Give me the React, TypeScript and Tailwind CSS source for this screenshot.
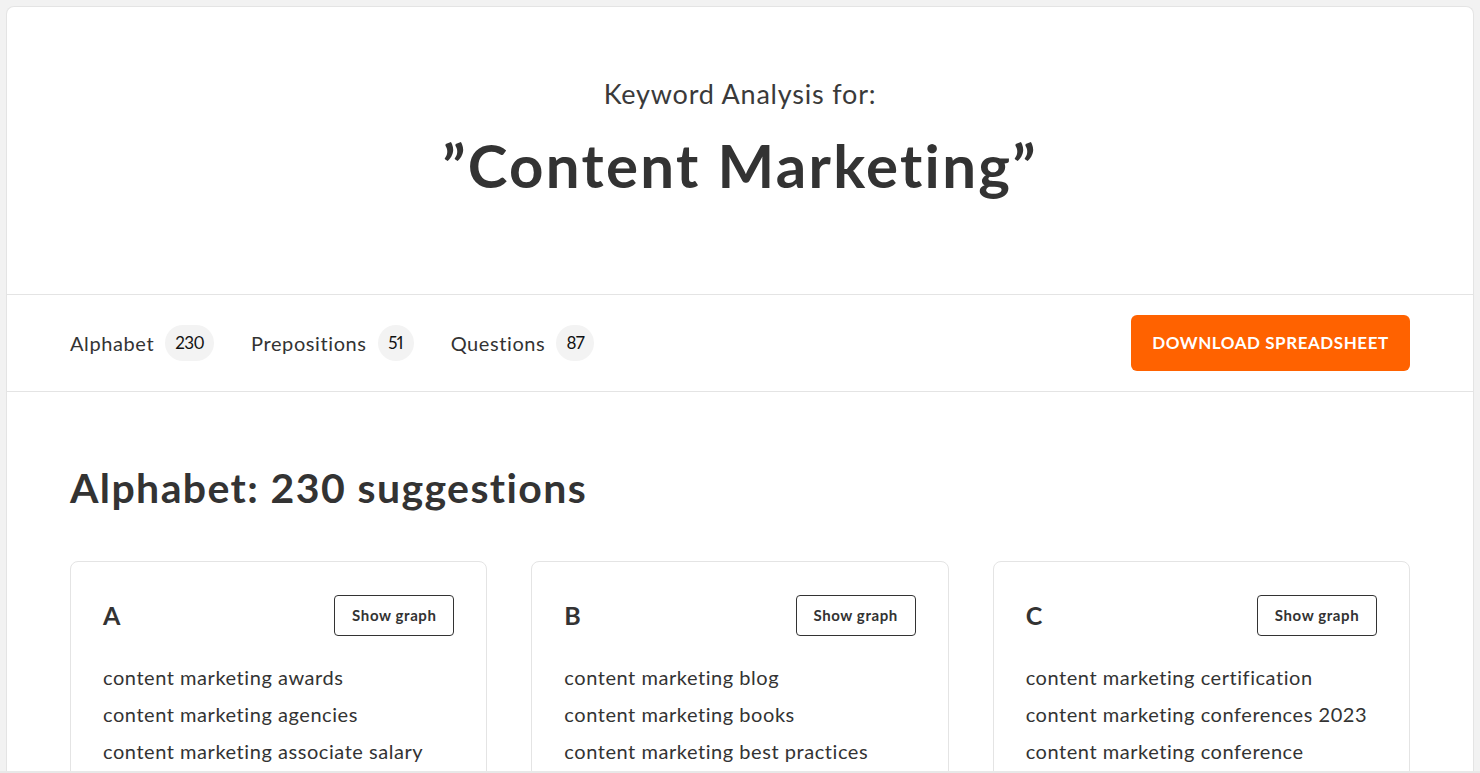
import React from "react";

const TABS = [
  { label: "Alphabet", count: 230 },
  { label: "Prepositions", count: 51 },
  { label: "Questions", count: 87 },
];

const GROUPS = [
  {
    letter: "A",
    items: [
      "content marketing awards",
      "content marketing agencies",
      "content marketing associate salary",
    ],
  },
  {
    letter: "B",
    items: [
      "content marketing blog",
      "content marketing books",
      "content marketing best practices",
    ],
  },
  {
    letter: "C",
    items: [
      "content marketing certification",
      "content marketing conferences 2023",
      "content marketing conference",
    ],
  },
];

const App = () => {
  return (
    <div className="h-screen overflow-hidden bg-[#f2f2f2] px-[6px] pt-[6px] border-b-2 border-[#e8e8e8] font-['Lato',sans-serif] text-[#333]">
      <div className="bg-white border border-b-0 border-[#e4e4e4] rounded-t-lg h-full">
        <header className="h-[288px] border-b border-[#e4e4e4] flex flex-col items-center pt-[71px]">
          <p className="text-[27px] leading-[32px] text-[#3a3a3a] tracking-[0.8px]">Keyword Analysis for:</p>
          <h1 className="mt-[23px] text-[60px] leading-[64px] font-bold tracking-[2.3px]">
            ”Content Marketing”
          </h1>
        </header>

        <nav className="h-[97px] border-b border-[#e4e4e4] flex items-center justify-between px-[63px]">
          <div className="flex items-center gap-[37px]">
            {TABS.map((tab) => (
              <div key={tab.label} className="flex items-center gap-[11px]">
                <span className="text-[20px] tracking-[0.6px] text-[#333]">{tab.label}</span>
                <span className="h-[36px] min-w-[36px] px-[10px] rounded-full bg-[#f3f3f3] flex items-center justify-center text-[17px] tracking-[-0.6px] proportional-nums text-[#111]">
                  {tab.count}
                </span>
              </div>
            ))}
          </div>
          <button className="h-[56px] w-[279px] rounded-md bg-[#ff6200] text-white font-bold text-[17px] tracking-[0.55px] uppercase">
            Download Spreadsheet
          </button>
        </nav>

        <section className="px-[63px] pt-[72px]">
          <h2 className="text-[41px] leading-[48px] font-bold tracking-[1.4px]">Alphabet: 230 suggestions</h2>
          <div className="mt-[49px] grid grid-cols-3 gap-[44px]">
            {GROUPS.map((group) => (
              <div key={group.letter} className="border border-[#e4e4e4] rounded-lg px-[32px] pt-[33px] pb-[24px]">
                <div className="flex items-center justify-between">
                  <span className="text-[25px] font-bold text-[#333]">{group.letter}</span>
                  <button className="h-[41px] w-[120px] border border-[#333] rounded text-[15px] tracking-[0.6px] font-bold text-[#333]">
                    Show graph
                  </button>
                </div>
                <ul className="mt-[23px] flex flex-col">
                  {group.items.map((item) => (
                    <li key={item} className="text-[20px] tracking-[0.55px] leading-[37px] text-[#333]">
                      {item}
                    </li>
                  ))}
                </ul>
              </div>
            ))}
          </div>
        </section>
      </div>
    </div>
  );
};

export default App;
